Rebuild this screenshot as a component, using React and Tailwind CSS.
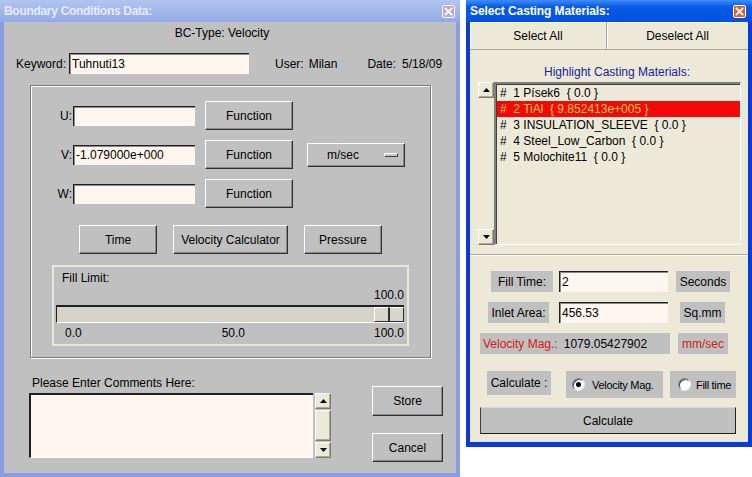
import React from 'react';

const raised = 'bg-[#c0c0c0] border border-t-white border-l-white border-r-[#303030] border-b-[#303030] shadow-[inset_-1px_-1px_0_#8a8a8a]';
const sunken = 'bg-[#fff6f0] border-t border-l border-t-[#202020] border-l-[#202020] shadow-[inset_1px_1px_0_#8a8a8a]';
const xpBtn = 'bg-[#ece9d8] border border-t-white border-l-white border-r-[#7f7c70] border-b-[#7f7c70] shadow-[inset_-1px_-1px_0_#aca899]';

function CloseX({ className }) {
  return (
    <div className={`w-[13px] h-[13px] rounded-[2px] border border-white flex items-center justify-center ${className}`}>
      <svg width="9" height="9" viewBox="0 0 9 9">
        <path d="M1.5 1.5 L7.5 7.5 M7.5 1.5 L1.5 7.5" stroke="white" strokeWidth="1.8" strokeLinecap="square" />
      </svg>
    </div>
  );
}

function Field({ value, className }) {
  return (
    <div className={`${sunken} flex items-center pl-[2px] text-black ${className}`}>{value}</div>
  );
}

function Btn({ children, className }) {
  return <div className={`${raised} flex items-center justify-center ${className}`}>{children}</div>;
}

function Arrow({ up }) {
  return (
    <svg width="7" height="4" viewBox="0 0 7 4">
      <path d={up ? 'M0 4 L3.5 0 L7 4 Z' : 'M0 0 L7 0 L3.5 4 Z'} fill="#000" />
    </svg>
  );
}

function Gray({ children, className }) {
  return <div className={`bg-[#c0c0c0] flex items-center justify-center whitespace-nowrap ${className}`}>{children}</div>;
}

function Radio({ checked }) {
  return (
    <div className="w-[13px] h-[13px] shrink-0 rounded-full bg-white border border-t-[#808080] border-l-[#808080] border-b-[#e8e8e8] border-r-[#e8e8e8] shadow-[inset_1px_1px_0_#404040] flex items-center justify-center">
      {checked && <div className="w-[5px] h-[5px] rounded-full bg-black" />}
    </div>
  );
}

const MATERIALS = [
  '#  1 Písek6  { 0.0 }',
  '#  2 TiAl  { 9.852413e+005 }',
  '#  3 INSULATION_SLEEVE  { 0.0 }',
  '#  4 Steel_Low_Carbon  { 0.0 }',
  '#  5 Molochite11  { 0.0 }',
];

export default function App() {
  return (
    <div className="w-[752px] h-[477px] bg-white flex items-start font-['Liberation_Sans',Arial,sans-serif] text-[12px] leading-[14px] text-black">
      {/* Boundary conditions window (inactive) */}
      <div className="w-[460px] h-[477px] bg-[#8a9de3] flex flex-col shrink-0">
        <div className="h-[22px] flex items-center justify-between pl-[4px] pr-[5px] bg-gradient-to-b from-[#b3c4f1] to-[#93a9e8]">
          <span className="text-[#e4ecfb] font-bold text-[12px] tracking-[-0.3px]">Boundary Conditions Data:</span>
          <CloseX className="bg-[#bba7dd]" />
        </div>
        <div className="flex-1 mx-[4px] mb-[4px] bg-[#c0c0c0] flex flex-col">
          <div className="mt-[4px] text-center pr-[16px]">BC-Type: Velocity</div>

          <div className="mt-[13px] flex items-center h-[21px] pl-[12px]">
            <span>Keyword:</span>
            <Field value="Tuhnuti13" className="ml-[3px] w-[180px] h-[21px]" />
            <span className="ml-[26px]">User:</span>
            <span className="ml-[5px]">Milan</span>
            <span className="ml-[30px]">Date:</span>
            <span className="ml-[6px]">5/18/09</span>
          </div>

          {/* velocity group */}
          <div className="mt-[11px] ml-[26px] w-[401px] h-[273px] border border-[#7c7c7c] shadow-[inset_1px_1px_0_#fff,1px_1px_0_#fff] flex flex-col pt-[15px]">
            <div className="flex items-center h-[29px]">
              <span className="w-[41px] text-right">U:</span>
              <Field value="" className="ml-[1px] w-[122px] h-[20px]" />
              <Btn className="ml-[10px] w-[88px] h-[29px]">Function</Btn>
            </div>
            <div className="mt-[10px] flex items-center h-[29px]">
              <span className="w-[41px] text-right">V:</span>
              <Field value="-1.079000e+000" className="ml-[1px] w-[122px] h-[20px]" />
              <Btn className="ml-[10px] w-[88px] h-[29px]">Function</Btn>
              <div className={`${raised} ml-[14px] w-[98px] h-[24px] flex items-center pl-[19px]`}>
                <span>m/sec</span>
                <div className="ml-auto mr-[6px] w-[14px] h-[4px] bg-[#c8c8c8] border border-t-white border-l-white border-r-[#404040] border-b-[#404040]" />
              </div>
            </div>
            <div className="mt-[10px] flex items-center h-[29px]">
              <span className="w-[41px] text-right">W:</span>
              <Field value="" className="ml-[1px] w-[122px] h-[20px]" />
              <Btn className="ml-[10px] w-[88px] h-[29px]">Function</Btn>
            </div>

            <div className="mt-[17px] flex pl-[48px] gap-[16px]">
              <Btn className="w-[78px] h-[29px]">Time</Btn>
              <Btn className="w-[115px] h-[29px]">Velocity Calculator</Btn>
              <Btn className="w-[78px] h-[29px]">Pressure</Btn>
            </div>

            {/* fill limit */}
            <div className="mt-[11px] ml-[21px] w-[357px] h-[81px] border-2 border-[#e8e8dc] flex flex-col">
              <div className="mt-[4px] pl-[8px]">Fill Limit:</div>
              <div className="mt-[3px] text-right pr-[3px]">100.0</div>
              <div className="mt-[3px] ml-[2px] w-[348px] h-[18px] bg-[#d6d3cb] border-t-2 border-l border-t-[#202020] border-l-[#202020] border-b border-b-white flex justify-end">
                <div className="w-[30px] h-full flex">
                  <div className="flex-1 bg-[#d8d5cd] border border-t-white border-l-white border-r-[#303030] border-b-[#303030]" />
                  <div className="flex-1 bg-[#d8d5cd] border border-t-white border-l-[#303030] border-r-[#303030] border-b-[#303030]" />
                </div>
              </div>
              <div className="mt-[3px] flex">
                <span className="ml-[11px]">0.0</span>
                <span className="ml-[140px]">50.0</span>
                <span className="ml-auto pr-[3px]">100.0</span>
              </div>
            </div>
          </div>

          {/* comments */}
          <div className="flex">
            <div className="ml-[25px] mt-[18px] flex flex-col">
              <span className="pl-[3px]">Please Enter Comments Here:</span>
              <div className="mt-[3px] flex">
                <div className="w-[284px] h-[65px] bg-[#fff6f0] border-t-2 border-l-2 border-t-[#202020] border-l-[#202020] border-b border-b-white" />
                <div className="ml-[2px] w-[16px] h-[65px] flex flex-col">
                  <div className={`${xpBtn} h-[16px] flex items-center justify-center`}><Arrow up /></div>
                  <div className={`${xpBtn} mt-[1px] flex-1`} />
                  <div className={`${xpBtn} mt-[1px] h-[16px] flex items-center justify-center`}><Arrow /></div>
                </div>
              </div>
            </div>
            <div className="ml-[41px] mt-[28px] flex flex-col">
              <Btn className="w-[71px] h-[30px]">Store</Btn>
              <Btn className="mt-[17px] w-[71px] h-[29px]">Cancel</Btn>
            </div>
          </div>
        </div>
      </div>

      {/* Casting materials window (active) */}
      <div className="ml-[6px] w-[286px] h-[447px] bg-[#0a3ad8] flex flex-col shrink-0">
        <div className="h-[22px] flex items-center justify-between pl-[4px] pr-[6px] bg-gradient-to-b from-[#3d8ef9] via-[#0a5ae8] via-30% to-[#0250e0]">
          <span className="text-white font-bold text-[12px] tracking-[-0.1px]">Select Casting Materials:</span>
          <CloseX className="bg-[#e25a32]" />
        </div>
        <div className="flex-1 mx-[4px] mb-[5px] bg-[#ece9d8] flex flex-col">
          <div className="flex h-[28px]">
            <div className="w-[137px] h-full flex items-center justify-center border-r border-b border-r-[#aca899] border-b-[#aca899] shadow-[inset_1px_1px_0_#fff]">Select All</div>
            <div className="flex-1 h-full flex items-center justify-center border-b border-b-[#aca899] shadow-[inset_1px_1px_0_#fff]">Deselect All</div>
          </div>

          <div className="mt-[15px] text-center pl-[16px] text-[#22229a]">Highlight Casting Materials:</div>

          <div className="mt-[3px] ml-[8px] flex h-[163px]">
            <div className="w-[16px] h-full flex flex-col">
              <div className={`${xpBtn} h-[16px] flex items-center justify-center`}><Arrow up /></div>
              <div className="flex-1" />
              <div className={`${xpBtn} h-[16px] flex items-center justify-center`}><Arrow /></div>
            </div>
            <div className="w-[247px] h-full border-t-2 border-l-2 border-t-[#808080] border-l-[#808080] border-b border-r border-b-white border-r-white shadow-[inset_1px_1px_0_#404040] pt-[1px] pl-[1px]">
              {MATERIALS.map((m, i) => (
                <div
                  key={i}
                  className={`h-[16px] leading-[16px] pl-[3px] whitespace-pre ${i === 1 ? 'bg-[#f20a0a] text-[#f4c84a]' : ''}`}
                >
                  {m}
                </div>
              ))}
            </div>
          </div>

          <div className="mt-[9px] h-[2px] border-t border-t-[#aca899] border-b border-b-white" />

          <div className="mt-[15px] flex items-center h-[21px]">
            <Gray className="ml-[21px] w-[62px] h-[21px]">Fill Time:</Gray>
            <Field value="2" className="ml-[6px] w-[109px] h-[21px]" />
            <Gray className="ml-[8px] w-[54px] h-[21px]">Seconds</Gray>
          </div>
          <div className="mt-[10px] flex items-center h-[21px]">
            <Gray className="ml-[18px] w-[61px] h-[21px]">Inlet Area:</Gray>
            <Field value="456.53" className="ml-[10px] w-[109px] h-[21px]" />
            <Gray className="ml-[12px] w-[45px] h-[21px]">Sq.mm</Gray>
          </div>
          <div className="mt-[10px] flex items-center h-[21px]">
            <div className="ml-[10px] w-[190px] h-[21px] bg-[#c0c0c0] flex items-center pl-[3px]">
              <span className="text-[#d21a1a]">Velocity Mag.:</span>
              <span className="ml-[6px]">1079.05427902</span>
            </div>
            <Gray className="ml-[8px] w-[50px] h-[21px] text-[#d21a1a]">mm/sec</Gray>
          </div>
          <div className="mt-[17px] flex items-start">
            <Gray className="ml-[17px] w-[64px] h-[24px]">Calculate :</Gray>
            <Gray className="ml-[15px] w-[97px] h-[27px] justify-start pl-[6px] gap-[7px]">
              <Radio checked />
              <span className="text-[11px] tracking-[-0.3px]">Velocity Mag.</span>
            </Gray>
            <Gray className="ml-[7px] w-[66px] h-[27px] justify-start pl-[8px] gap-[5px]">
              <Radio />
              <span className="text-[11px] tracking-[-0.3px]">Fill time</span>
            </Gray>
          </div>
          <div className="mt-[9px] ml-[10px] w-[256px] h-[27px] bg-[#c0c0c0] border border-t-[#d8d8d8] border-l-[#404040] border-r-[#202020] border-b-[#202020] flex items-center justify-center">
            Calculate
          </div>
        </div>
      </div>
    </div>
  );
}
